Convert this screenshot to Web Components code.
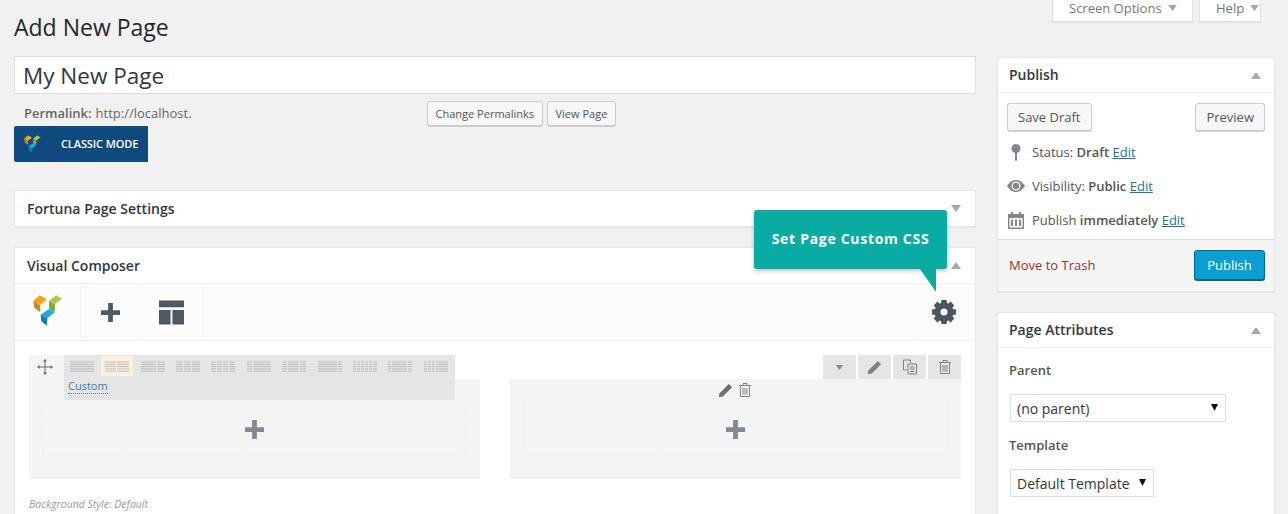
<!DOCTYPE html>
<html>
<head>
<meta charset="utf-8">
<title>Add New Page</title>
<style>
  html, body { margin: 0; height: 514px; overflow: hidden; background: #f1f1f1; }
  body { font: 13px/19px "Open Sans", sans-serif; color: #444; }
</style>
</head>
<body>
<wp-edit-page>
  <div slot="main">
    <wp-title-area></wp-title-area>
    <wp-postbox heading="Fortuna Page Settings" closed style="margin-top:28px"></wp-postbox>
    <wp-postbox heading="Visual Composer" flush style="margin-top:20px">
      <vc-editor></vc-editor>
    </wp-postbox>
  </div>
  <div slot="side">
    <wp-screen-tabs></wp-screen-tabs>
    <wp-publish-box></wp-publish-box>
    <wp-attributes-box style="margin-top:20px"></wp-attributes-box>
  </div>
</wp-edit-page>

<script>
// shared svg bits
const VC_LOGO = `
  <svg viewBox="100 46 90 93" xmlns="http://www.w3.org/2000/svg" style="display:block;width:100%;height:100%">
    <polygon points="101,63 120,47 140,57 140,62 121,76" fill="#f9a51c"/>
    <polygon points="101,63 121,76 122,98 104,85" fill="#c88a22"/>
    <polygon points="148,63 170,47 187,57 166,74" fill="#a9cb4c"/>
    <polygon points="148,63 166,74 165,98 148,88" fill="#83a934"/>
    <polygon points="123,105 148,88 165,98 143,116" fill="#1fa9e1"/>
    <polygon points="123,105 143,116 141,138 125,125" fill="#0b7fb8"/>
  </svg>`;

const TRASH = (c) => `
  <svg viewBox="0 0 14 16" width="14" height="16" fill="none" stroke="${c}" stroke-width="1" style="display:block">
    <path d="M1 3.5h12M5 3.5V1.5h4v2M2.500 3.500v11h9v-11M5 6v6.500M7 6v6.500M9 6v6.500"/>
  </svg>`;

const PENCIL = (c) => `
  <svg viewBox="0 0 16 16" width="15" height="15" style="display:block">
    <path d="M11.500 1l3.500 3.500L5.200 14.300 0.800 15.200 1.700 10.800z" fill="${c}"/>
  </svg>`;

const PLUS = `<path d="M7.500 0h5v7.500H20v5h-7.500V20h-5v-7.500H0v-5h7.500z"/>`;

function caret(up, color, w = 10, h = 7) {
  const pts = up ? "0,7 5,0 10,7" : "0,0 10,0 5,7";
  return `<svg viewBox="0 0 10 7" width="${w}" height="${h}" style="display:block"><polygon points="${pts}" fill="${color}"/></svg>`;
}

class WpEditPage extends HTMLElement {
  constructor() {
    super();
    this.attachShadow({ mode: "open" }).innerHTML = `
      <style>
        :host { display: grid; grid-template-columns: 962px 278px; column-gap: 21px; padding-left: 14px; }
      </style>
      <slot name="main"></slot>
      <slot name="side"></slot>`;
  }
}

class WpTitleArea extends HTMLElement {
  constructor() {
    super();
    this.attachShadow({ mode: "open" }).innerHTML = `
      <style>
        :host { display: block; }
        h1 { margin: 0; padding-top: 11px; height: 56px; box-sizing: border-box; font: 400 23px/32px "Open Sans", sans-serif; color: #23282d; }
        .title { height: 38px; box-sizing: border-box; background: #fff; border: 1px solid #ddd; padding-left: 8px;
                 font: 400 22.500px/37px "Open Sans", sans-serif; color: #32373c; }
        .perma { display: flex; align-items: center; height: 25px; margin-top: 7px; padding-left: 10px; color: #666; }
        .perma b { font-weight: 600; margin-right: 4px; }
        .btns { display: flex; gap: 4px; margin-left: 235px; }
        .btns span { height: 25px; box-sizing: border-box; padding: 0 8px; border: 1px solid #ccc; border-radius: 3px;
                     background: #f7f7f7; box-shadow: 0 1px 0 #ccc; font-size: 11px; line-height: 23px; color: #555; }
        .btns span + span { padding: 0 7.500px; }
        .classic { display: flex; width: 134px; height: 36px; background: #0f4a7f; border-radius: 2px 0 0 2px; color: #fff; }
        .classic .logo { width: 37px; border-right: 1px solid #0c4070; display: flex; align-items: center; justify-content: center; box-sizing: border-box; padding-bottom: 1px; }
        .classic .logo div { width: 17px; height: 18px; }
        .classic .txt { padding-left: 10px; font: 600 11px/36px "Open Sans", sans-serif; letter-spacing: -0.1px; }
      </style>
      <h1>Add New Page</h1>
      <div class="title">My New Page</div>
      <div class="perma"><b>Permalink:</b> http://localhost.
        <div class="btns"><span>Change Permalinks</span><span>View Page</span></div>
      </div>
      <div class="classic"><div class="logo"><div>${VC_LOGO}</div></div><div class="txt">CLASSIC MODE</div></div>`;
  }
}

class WpPostbox extends HTMLElement {
  constructor() {
    super();
    const closed = this.hasAttribute("closed");
    this.attachShadow({ mode: "open" }).innerHTML = `
      <style>
        :host { display: block; background: #fff; border: 1px solid #e5e5e5; box-shadow: 0 1px 1px rgba(0,0,0,.04); }
        header { display: flex; align-items: center; justify-content: space-between; height: 35px; padding: 0 14px 0 12px;
                 font: 600 14px/35px "Open Sans", sans-serif; color: #32373c; }
        :host(:not([closed])) header { border-bottom: 1px solid #eee; }
        .body { display: block; }
        :host([closed]) .body { display: none; }
      </style>
      <header>${this.getAttribute("heading")}${caret(!closed, "#a8a8a8")}</header>
      <div class="body"><slot></slot></div>`;
  }
}

class VcEditor extends HTMLElement {
  constructor() {
    super();
    this.attachShadow({ mode: "open" }).innerHTML = `
      <style>
        :host { display: block; position: relative; height: 240px; }
        .nav { display: flex; height: 56px; background: #fcfcfc; border-bottom: 1px solid #f0f0f0; }
        .nav div { display: flex; align-items: center; justify-content: center; border-right: 1px solid #f4f4f4; box-sizing: border-box; }
        .nav .logo { width: 66px; }
        .nav .logo span { display: block; width: 30px; height: 31px; margin-bottom: 4px; }
        .nav .add { width: 61px; padding-right: 2px; } .nav .tpl { width: 62px; padding-right: 3px; }
        .nav .add svg { fill: #4f5963; }
        .nav .gear { width: 61px; margin-left: auto; border-right: 0; border-left: 1px solid #f4f4f4; padding-right: 3px; }
        .tip { position: absolute; left: 739px; top: -74px; width: 193px; height: 59px; background: #0aaba3; border-radius: 3px;
               box-shadow: 0 2px 4px rgba(0,0,0,.25); color: #fff; text-align: center;
               font: 700 14px/58px "Open Sans", sans-serif; letter-spacing: .7px; }
        .tip::after { content: ""; position: absolute; left: 166px; top: 59px; width: 16px; height: 23px; background: #0aaba3;
                      clip-path: polygon(0 0, 100% 0, 100% 100%); }
        .rows { padding: 14px 14px 0; }
        .foot { margin-top: 17px; font: italic 400 10.500px/16px "Open Sans", sans-serif; color: #999; }
      </style>
      <div class="nav">
        <div class="logo"><span>${VC_LOGO}</span></div>
        <div class="add">
          <svg width="19" height="19" viewBox="0 0 20 20">${PLUS}</svg>
        </div>
        <div class="tpl">
          <svg width="25" height="25" viewBox="0 0 26 25"><path d="M0 0h26v7H0zM0 10h12v15H0zM14 10h12v15H14z" fill="#4f5963"/></svg>
        </div>
        <div class="gear">
          <svg width="24" height="24" viewBox="-12 -12 24 24">
            <circle r="6.500" fill="none" stroke="#4a545e" stroke-width="6"/>
            <g fill="#4a545e">
              ${[0, 45, 90, 135, 180, 225, 270, 315].map((a) => `<rect x="-2.800" y="-12" width="5.600" height="6" rx=".8" transform="rotate(${a})"/>`).join("")}
            </g>
          </svg>
        </div>
      </div>
      <div class="tip">Set Page Custom CSS</div>
      <div class="rows">
        <vc-row></vc-row>
        <div class="foot">Background Style: Default</div>
      </div>`;
  }
}

// one line-pattern thumbnail of a column layout, e.g. "1/2 1/2"
class VcLayoutIcon extends HTMLElement {
  constructor() {
    super();
    const parts = this.getAttribute("cols").split(" ").map((p) => {
      const [a, b] = p.split("/");
      return a / b;
    });
    let x = 0;
    let lines = "";
    parts.forEach((p) => {
      const w = p * 24;
      for (let y = 0.5; y < 12; y += 2.300) {
        lines += `<rect x="${x}" y="${y}" width="${w - (x + w < 24 ? 1 : 0)}" height="1"/>`;
      }
      x += w;
    });
    this.attachShadow({ mode: "open" }).innerHTML = `
      <style>
        :host { display: flex; align-items: center; justify-content: center; width: 32px; height: 20px; margin-right: 3.400px; }
        :host([active]) { background: #fbf0dc; }
        svg { display: block; fill: #bdbdbd; margin-top: 2px; }
      </style>
      <svg width="24" height="12" viewBox="0 0 24 12">${lines}</svg>`;
  }
}

class VcRow extends HTMLElement {
  constructor() {
    super();
    const layouts = ["1/1", "1/2 1/2", "2/3 1/3", "1/3 1/3 1/3", "1/4 1/4 1/4 1/4", "1/4 3/4", "1/4 1/2 1/4",
      "5/6 1/6", "1/6 1/6 1/6 1/6 1/6 1/6", "1/6 4/6 1/6", "1/6 1/6 1/6 1/2"];
    this.attachShadow({ mode: "open" }).innerHTML = `
      <style>
        :host { display: block; position: relative; }
        .top { display: flex; justify-content: space-between; height: 24px; }
        .move { width: 35px; box-sizing: border-box; padding-right: 3px; display: flex; align-items: center; justify-content: center; background: #f4f4f4; }
        .picker { position: absolute; left: 35px; top: 0; width: 391px; height: 45px; background: #e5e5e5; box-sizing: border-box; padding: 1px 0 0 2px; z-index: 1; }
        .icons { display: flex; }
        .custom { display: inline-block; margin-left: 2px; font-size: 11px; line-height: 14px; color: #3f7ea8; border-bottom: 1px dotted #3f7ea8; margin-top: 2px; }
        .actions { display: flex; gap: 2px; }
        .actions span { display: flex; align-items: center; justify-content: center; width: 33px; height: 24px; background: #e5e5e5; }
        .cols { display: flex; justify-content: space-between; }
        .col { width: 451px; height: 100px; box-sizing: border-box; background: #f4f4f4; padding: 25px 13px 24px; }
        .cell { height: 51px; box-sizing: border-box; border: 1px dashed #efefef; display: flex; align-items: center; justify-content: center; }
        .tools { position: absolute; display: flex; align-items: center; gap: 5px; left: 689px; top: 27px; }
        .plus { fill: #7f8a94; display: block; margin: 0 1px 1px 0; }
      </style>
      <div class="top">
        <div class="move">
          <svg width="16" height="16" viewBox="0 0 16 16" fill="#666">
            <path d="M7.500 2h1v12h-1zM2 7.500h12v1H2z"/>
            <path d="M8 0l2 2.500H6zM8 16l-2-2.500h4zM0 8l2.500-2v4zM16 8l-2.500 2V6z"/>
          </svg>
        </div>
        <div class="picker">
          <div class="icons">${layouts.map((l, i) => `<vc-layout-icon cols="${l}"${i === 1 ? " active" : ""}></vc-layout-icon>`).join("")}</div>
          <span class="custom">Custom</span>
        </div>
        <div class="actions">
          <span>${caret(false, "#8a8a8a", 9, 5)}</span>
          <span>${PENCIL("#808080")}</span>
          <span>
            <svg viewBox="0 0 16 16" width="16" height="16" fill="none" stroke="#808080" stroke-width="1" style="display:block">
              <path d="M1.500 1h7v3M1.500 1v10h3M6 5h8.500v10H6zM8 8h4.500M8 10h4.500M8 12.500h4.500"/>
            </svg>
          </span>
          <span>${TRASH("#808080")}</span>
        </div>
      </div>
      <div class="cols">
        <div class="col"><div class="cell"><svg class="plus" width="19" height="19" viewBox="0 0 20 20">${PLUS}</svg></div></div>
        <div class="col"><div class="cell"><svg class="plus" width="19" height="19" viewBox="0 0 20 20">${PLUS}</svg></div></div>
      </div>
      <div class="tools">${PENCIL("#707070")}${TRASH("#808080")}</div>`;
  }
}

class WpScreenTabs extends HTMLElement {
  constructor() {
    super();
    this.attachShadow({ mode: "open" }).innerHTML = `
      <style>
        :host { display: flex; justify-content: flex-end; gap: 6px; height: 22px; margin: 0 14px 35px 0; }
        span { display: flex; align-items: center; gap: 6px; height: 22px; box-sizing: border-box; padding: 0 0 5px 16px; background: #fff; white-space: nowrap;
               border: 1px solid #e1e1e1; border-top: 0; box-shadow: 0 1px 1px rgba(0,0,0,.04); color: #72777c; }
        span.opt { width: 141px; } span.help { width: 62px; }
      </style>
      <span class="opt">Screen Options ${caret(false, "#a0a5aa", 9, 6)}</span>
      <span class="help">Help ${caret(false, "#a0a5aa", 9, 6)}</span>`;
  }
}

class WpPublishBox extends HTMLElement {
  constructor() {
    super();
    const edit = `<a>Edit</a>`;
    this.attachShadow({ mode: "open" }).innerHTML = `
      <style>
        :host { display: block; background: #fff; border: 1px solid #e5e5e5; box-shadow: 0 1px 1px rgba(0,0,0,.04); }
        header { display: flex; align-items: center; justify-content: space-between; height: 34px; padding: 0 13px 0 11px; border-bottom: 1px solid #eee;
                 font: 600 14px/34px "Open Sans", sans-serif; color: #32373c; }
        .btns { display: flex; justify-content: space-between; padding: 10px 9px 0; }
        .btn { height: 28px; box-sizing: border-box; padding: 0 10px; border: 1px solid #ccc; border-radius: 3px; background: #f7f7f7; box-shadow: 0 1px 0 #ccc; line-height: 26px; color: #555; }
        .misc { padding-top: 4px; height: 108px; box-sizing: border-box; }
        .misc div { display: flex; align-items: center; height: 34px; padding-left: 9px; color: #555; }
        .misc i { width: 18px; display: flex; justify-content: center; margin-right: 7px; flex: none; }
        .misc svg { display: block; }
        b { font-weight: 600; }
        a { color: #21759b; text-decoration: underline; }
        footer { display: flex; justify-content: space-between; align-items: center; height: 50px; padding: 0 9px 1px 11px; background: #f5f5f5; border-top: 1px solid #ddd; }
        .trash { color: #993333; }
        .pub { height: 30px; box-sizing: border-box; width: 71px; text-align: center; border: 1px solid #006799; border-radius: 3px; background: #0a9fd3; color: #fff; line-height: 28px; box-shadow: 0 1px 0 #006799; }
      </style>
      <header>Publish${caret(true, "#a8a8a8")}</header>
      <div class="btns"><span class="btn">Save Draft</span><span class="btn">Preview</span></div>
      <div class="misc">
        <div><i><svg width="10" height="17" viewBox="0 0 10 17" fill="#82878c"><circle cx="5" cy="4.500" r="4.500"/><rect x="4" y="6" width="2" height="11" rx="1"/></svg></i><span>Status: <b>Draft</b> ${edit}</span></div>
        <div><i><svg width="18" height="12" viewBox="0 0 18 12"><path d="M0 6C3 1.500 6 0 9 0s6 1.500 9 6c-3 4.500-6 6-9 6S3 10.500 0 6z" fill="#82878c"/><circle cx="9" cy="6" r="4.500" fill="#fff"/><circle cx="9" cy="6" r="3.200" fill="#82878c"/></svg></i><span>Visibility: <b>Public</b> ${edit}</span></div>
        <div><i><svg width="16" height="17" viewBox="0 0 16 17" fill="#82878c"><path d="M0 2h3V0h2v2h6V0h2v2h3v15H0zM1.500 6v9.500h13V6z"/><path d="M3 7.500h2v6.500H3zM7 7.500h2v6.500H7zM11 7.500h2v6.500h-2z"/></svg></i><span>Publish <b>immediately</b> ${edit}</span></div>
      </div>
      <footer><span class="trash">Move to Trash</span><span class="pub">Publish</span></footer>`;
  }
}

class WpSelect extends HTMLElement {
  constructor() {
    super();
    this.attachShadow({ mode: "open" }).innerHTML = `
      <style>
        :host { display: flex; align-items: center; justify-content: space-between; box-sizing: border-box; height: 28px; background: #fff; border: 1px solid #ddd; padding: 0 7px 0 6px; font-size: 14px; color: #32373c; }
        svg { display: block; margin-bottom: 2px; }
      </style>
      <slot></slot>
      <svg width="7" height="7" viewBox="0 0 7 7"><polygon points="0,0 7,0 3.500,7" fill="#111"/></svg>`;
  }
}

class WpAttributesBox extends HTMLElement {
  constructor() {
    super();
    this.attachShadow({ mode: "open" }).innerHTML = `
      <style>
        :host { display: block; background: #fff; border: 1px solid #e5e5e5; box-shadow: 0 1px 1px rgba(0,0,0,.04); padding-bottom: 20px; }
        header { display: flex; align-items: center; justify-content: space-between; height: 34px; padding: 0 13px 0 11px; border-bottom: 1px solid #eee;
                 font: 600 14px/34px "Open Sans", sans-serif; color: #32373c; }
        p { margin: 0; padding-left: 11px; font-weight: 600; color: #555; line-height: 19px; }
        wp-select { margin-left: 12px; }
      </style>
      <header>Page Attributes${caret(true, "#a8a8a8")}</header>
      <p style="margin-top:13px">Parent</p>
      <wp-select style="width:216px;margin-top:14px">(no parent)</wp-select>
      <p style="margin-top:14px">Template</p>
      <wp-select style="width:144px;margin-top:14px">Default Template</wp-select>`;
  }
}

customElements.define("wp-select", WpSelect);
customElements.define("wp-edit-page", WpEditPage);
customElements.define("wp-title-area", WpTitleArea);
customElements.define("wp-postbox", WpPostbox);
customElements.define("vc-layout-icon", VcLayoutIcon);
customElements.define("vc-row", VcRow);
customElements.define("vc-editor", VcEditor);
customElements.define("wp-screen-tabs", WpScreenTabs);
customElements.define("wp-publish-box", WpPublishBox);
customElements.define("wp-attributes-box", WpAttributesBox);
</script>
</body>
</html>
